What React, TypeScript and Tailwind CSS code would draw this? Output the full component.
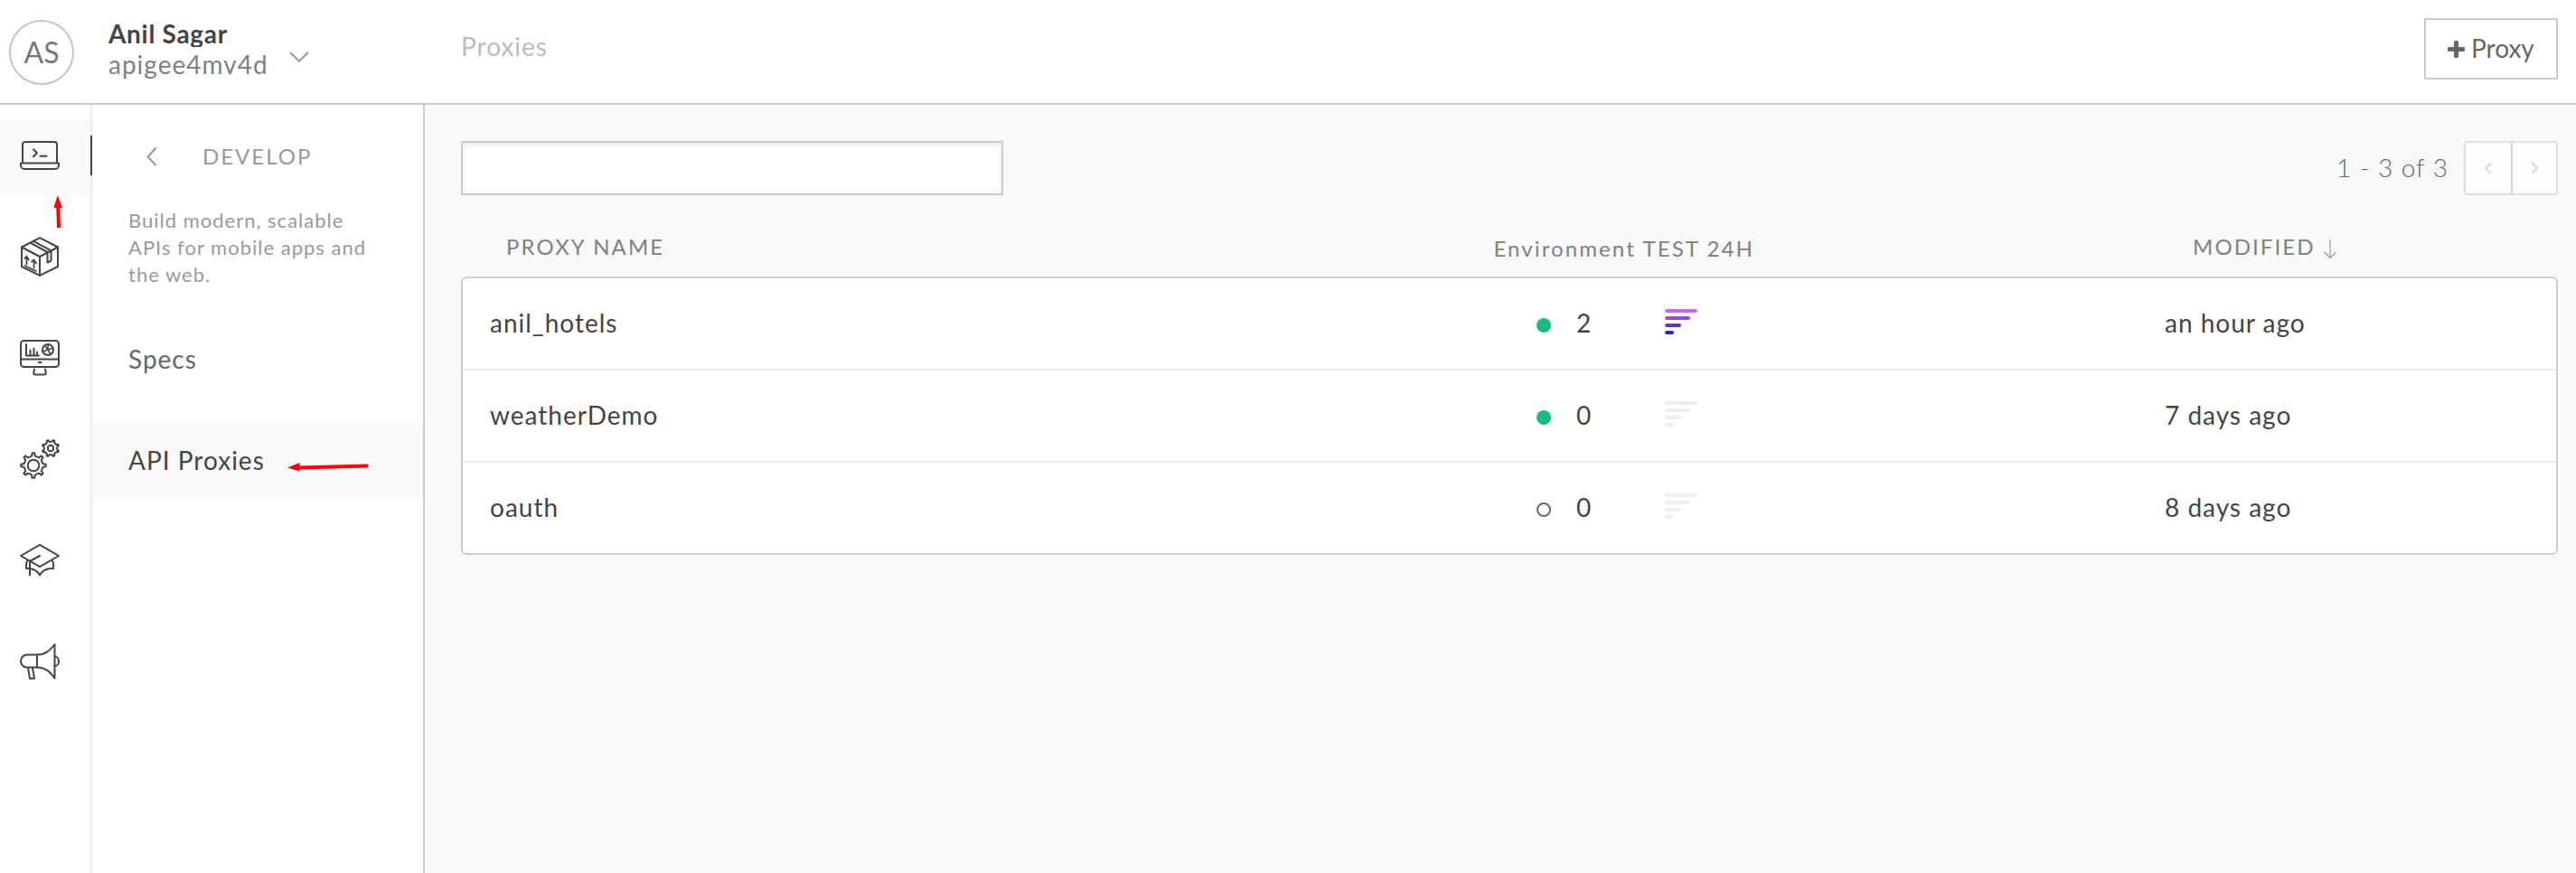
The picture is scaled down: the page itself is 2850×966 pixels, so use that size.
import type { ReactNode } from 'react';

type Proxy = { name: string; deployed: boolean; traffic: number; modified: string };

const proxies: Proxy[] = [
  { name: 'anil_hotels', deployed: true, traffic: 2, modified: 'an hour ago' },
  { name: 'weatherDemo', deployed: true, traffic: 0, modified: '7 days ago' },
  { name: 'oauth', deployed: false, traffic: 0, modified: '8 days ago' },
];

function Icon({ children }: { children: ReactNode }) {
  return (
    <svg
      className="size-11 text-[#444]"
      viewBox="0 0 44 44"
      fill="none"
      stroke="currentColor"
      strokeWidth="2"
      strokeLinejoin="round"
      strokeLinecap="round"
    >
      {children}
    </svg>
  );
}

function gearPath(cx: number, cy: number, outer: number, inner: number, teeth: number, turn = 0) {
  const step = (Math.PI * 2) / teeth;
  const at = (r: number, a: number) => `${(cx + r * Math.cos(a)).toFixed(2)} ${(cy + r * Math.sin(a)).toFixed(2)}`;
  let d = '';
  for (let i = 0; i < teeth; i++) {
    const a = (i + turn) * step - Math.PI / 2;
    d += `${i ? 'L' : 'M'}${at(inner + 0.6, a - step * 0.2)}L${at(outer, a - step * 0.12)}L${at(outer, a + step * 0.12)}L${at(inner + 0.6, a + step * 0.2)}`;
    d += `Q${at(inner - 0.6, a + step * 0.5)} ${at(inner + 0.6, a + step * 0.8)}`;
  }
  return `${d}Z`;
}

const navIcons: { id: string; icon: ReactNode }[] = [
  {
    id: 'develop',
    icon: (
      <Icon>
        <path d="M3 30V10a3 3 0 0 1 3-3h32a3 3 0 0 1 3 3v20" />
        <path d="M1 30.500h42v2.500a4 4 0 0 1-4 4h-34a4 4 0 0 1-4-4z" />
        <path d="M15 15.200l4 4l-4 4M22.500 22.800h7" />
      </Icon>
    ),
  },
  {
    id: 'publish',
    icon: (
      <Icon>
        <path d="M22 1.200L42 11.500V33L22 42.800L2 33V11.500Z" />
        <path d="M2 11.500L22 22L42 11.500M22 22V42.800" />
        <path d="M11.500 6.700L30.500 17V28.500L34.500 26.500V15.300L15 4.800" />
        <path d="M7.500 30.500V22.500M5.200 24.200L7.500 21.700L9.800 25.500M15.500 34.500V26M13 27.700L15.500 25.500L18 29.500M5.500 32L18 38" strokeWidth="1.700" />
      </Icon>
    ),
  },
  {
    id: 'analyze',
    icon: (
      <Icon>
        <rect x="1" y="3" width="42" height="29" rx="3.500" />
        <path d="M1 23.500h42M20.800 27h2.800M16 34.500l-.8 4.500c0 1 1 1.500 2 1.500h9.600c1 0 2-.5 2-1.500l-.8-4.500" />
        <path d="M7 7v12.500h14M11.500 19.500v-6M15.500 19.500v-8M19 19.500v-4" />
        <circle cx="31" cy="13" r="6" />
        <path d="M31 13L27.500 8.500M31 13l-5.800 2M31 13l3 5.200M31 13l5.500-2M31 13V7" strokeWidth="1.600" />
      </Icon>
    ),
  },
  {
    id: 'admin',
    icon: (
      <Icon>
        <path d={gearPath(15, 29, 13.8, 10.3, 8)} />
        <circle cx="15" cy="29" r="6.300" />
        <path d={gearPath(34, 10, 9.3, 7.2, 8, 0.5)} />
        <circle cx="34" cy="10" r="3.200" />
      </Icon>
    ),
  },
  {
    id: 'learn',
    icon: (
      <Icon>
        <path d="M22 4.800L43 17L22 29L1 17Z" strokeLinejoin="miter" />
        <path d="M22 17L11 23V38.500" />
        <path d="M8.500 22C6.500 25 6.800 28 7 31C14 30.500 19 33 22 38.500C25 33 30 30.500 37 31C37.500 28 37.500 25 35.500 22" />
      </Icon>
    ),
  },
  {
    id: 'notices',
    icon: (
      <Icon>
        <path d="M19 14.500H8a7 7 0 0 0 0 14H19Z" />
        <path d="M19 14.500C28 14.500 33 10 38.500 3V40.500C33 33 28 28.500 19 28.500" />
        <path d="M38.500 16.500C41.500 16.500 43 19 43 21.700S41.500 27 38.500 27M9 28.800L11 40.800H16L14 28.800" />
      </Icon>
    ),
  },
];

function Header() {
  return (
    <header className="flex h-[116px] shrink-0 border-b-2 border-[#ccc] bg-white">
      <div className="flex w-[510px] pl-[10px]">
        <div className="mt-[22px] flex size-[72px] shrink-0 items-center justify-center rounded-full border-2 border-[#c4c4c4] text-[32px] leading-none text-[#777]">
          AS
        </div>
        <div className="ml-[38px] mt-5 w-[176px]">
          <div className="h-8 overflow-hidden text-[28px] leading-[34px] font-bold tracking-[0.7px] text-[#444]">Anil Sagar</div>
          <div className="mt-px text-[28px] leading-[36px] tracking-[1px] text-[#808080]">apigee4mv4d</div>
        </div>
        <svg className="ml-[23px] mt-[55px] h-4 w-6" viewBox="0 0 24 16" fill="none" stroke="#999" strokeWidth="2">
          <path d="M2 3l10 9.500L22 3" />
        </svg>
      </div>
      <h1 className="mt-[33px] text-[28px] leading-[36px] tracking-[1px] text-[#bbb]">Proxies</h1>
      <button className="mt-5 mr-5 ml-auto flex h-[68px] w-[148px] items-center border-2 border-[#ccc] pl-6 text-[28px] leading-none text-[#666]">
        <svg className="mr-[7px] size-[19px]" viewBox="0 0 19 19" fill="#666">
          <rect x="0" y="7" width="19" height="5" rx="1.500" />
          <rect x="7" y="0" width="5" height="19" rx="1.500" />
        </svg>
        <span className="pb-0.5">Proxy</span>
      </button>
    </header>
  );
}

function IconRail() {
  return (
    <nav className="relative flex w-[102px] shrink-0 flex-col gap-7 border-r-2 border-[#ebebeb] bg-white pt-4">
      {navIcons.map(({ id, icon }) => (
        <div key={id} className={id === 'develop' ? 'h-[84px] bg-[#f8faf9] pt-[18px] pl-[22px]' : 'h-[84px] pt-[18px] pl-[22px]'}>
          {icon}
        </div>
      ))}
      <div className="absolute top-[34px] -right-0.5 h-11 w-0.5 bg-[#444]" />
      <svg className="absolute top-[100px] left-[59px] h-[37px] w-[11px]" viewBox="0 0 11 37" fill="#f00">
        <path d="M4.700 0L10 14H7.300L8 36H4L3.300 14H0.500Z" />
      </svg>
    </nav>
  );
}

function SidePanel() {
  return (
    <aside className="flex w-[368px] shrink-0 flex-col border-r-2 border-[#ccc] bg-white">
      <div className="mt-[39px] flex h-9 items-center pl-[59px]">
        <svg className="h-6 w-3.5" viewBox="0 0 14 24" fill="none" stroke="#999" strokeWidth="2">
          <path d="M11.500 2.500L2.500 12.500L11.500 22" />
        </svg>
        <span className="ml-[49px] text-[24px] leading-[36px] tracking-[2px] text-[#999]">DEVELOP</span>
      </div>
      <p className="mt-[38px] w-[340px] pl-10 text-[22px] leading-[30px] tracking-[1px] whitespace-pre text-[#999]">
        {'Build modern, scalable\nAPIs for mobile apps and\nthe web.'}
      </p>
      <a className="mt-[37px] flex h-[84px] items-center pb-0.5 pl-10 text-[28px] leading-none tracking-[1px] text-[#666]">Specs</a>
      <a className="mt-7 flex h-[84px] items-center bg-[#f8faf9] pb-0.5 pl-10 text-[28px] leading-none tracking-[1px] text-[#444]">
        API Proxies
        <svg className="ml-[25px] mt-4 h-[10px] w-[90px]" viewBox="0 0 90 10" fill="#f00">
          <path d="M0 5.500L13.500 0V3.500L89 1.500V5.500L13.500 7.500V9.500Z" />
        </svg>
      </a>
    </aside>
  );
}

function TrafficBars({ active }: { active: boolean }) {
  return (
    <div className="mb-1 flex flex-col gap-1">
      <i className={active ? 'h-1 w-9 rounded-sm bg-[#c86dd7]' : 'h-1 w-9 rounded-sm bg-[#efefef]'} />
      <i className={active ? 'h-1 w-7 rounded-sm bg-[#914fc7]' : 'h-1 w-7 rounded-sm bg-[#efefef]'} />
      <i className={active ? 'h-1 w-[18px] rounded-sm bg-[#6038b9]' : 'h-1 w-[18px] rounded-sm bg-[#efefef]'} />
      <i className={active ? 'h-1 w-2.5 rounded-sm bg-[#3023ae]' : 'h-1 w-2.5 rounded-sm bg-[#efefef]'} />
    </div>
  );
}

function ProxyTable() {
  return (
    <section>
      <div className="mt-[39px] grid h-[51px] grid-cols-[1142px_774px_1fr] text-[24px] leading-[36px] tracking-[2.1px] text-[#808080]">
        <span className="pl-[50px]">PROXY NAME</span>
        <span className="pt-0.5 pl-[0.5px]">Environment TEST 24H</span>
        <span className="flex">
          MODIFIED
          <svg className="ml-[8px] mt-[9px] h-6 w-4" viewBox="0 0 16 24" fill="none" stroke="#999" strokeWidth="1.200">
            <path d="M8 1V21.500M1.500 15L8 21.500L14.500 15" />
          </svg>
        </span>
      </div>
      <div className="divide-y-2 divide-[#ebebeb] rounded-md border-2 border-[#ccc] bg-white">
        {proxies.map((p) => (
          <div key={p.name} className="box-content grid h-[100px] grid-cols-[1188px_44px_98px_553px_1fr] items-center text-[28px] leading-[34px] tracking-[1px] text-[#444]">
            <span className="pb-0.5 pl-[30px]">{p.name}</span>
            <span className={p.deployed ? 'mt-1 size-4 rounded-full bg-[#1abc7b]' : 'mt-1 size-4 rounded-full border-2 border-[#666]'} />
            <span className="pb-0.5">{p.traffic}</span>
            <TrafficBars active={p.traffic > 0} />
            <span className="pb-0.5">{p.modified}</span>
          </div>
        ))}
      </div>
    </section>
  );
}

function Chevron({ d }: { d: string }) {
  return (
    <svg className="h-4 w-3" viewBox="0 0 12 16" fill="none" stroke="#d9d9d9" strokeWidth="2">
      <path d={d} />
    </svg>
  );
}

export default function App() {
  return (
    <div className="flex h-[966px] w-full flex-col overflow-hidden bg-white font-['Lato',sans-serif]">
      <Header />
      <div className="flex min-h-0 flex-1">
        <IconRail />
        <SidePanel />
        <main className="flex-1 bg-[#f8faf9] pt-10 pr-5 pl-10">
          <div className="flex h-[60px] items-center">
            <input className="h-[60px] w-[600px] border-2 border-[#ccc] bg-white px-4 text-[28px] shadow-[inset_0_2px_6px_rgba(0,0,0,0.1)] outline-none" />
            <span className="mr-[17px] mb-0.5 ml-auto text-[28px] leading-[34px] font-light tracking-[1px] text-[#666]">1 - 3 of 3</span>
            <div className="flex h-[60px] w-[104px] divide-x-2 divide-[#d4d4d4] rounded-[4px] border-2 border-[#ddd] bg-[#fdfdfd]">
              <button className="flex w-[52px] items-center justify-center">
                <Chevron d="M9 2L3 8L9 14" />
              </button>
              <button className="flex flex-1 items-center justify-center">
                <Chevron d="M3 2L9 8L3 14" />
              </button>
            </div>
          </div>
          <ProxyTable />
        </main>
      </div>
    </div>
  );
}
